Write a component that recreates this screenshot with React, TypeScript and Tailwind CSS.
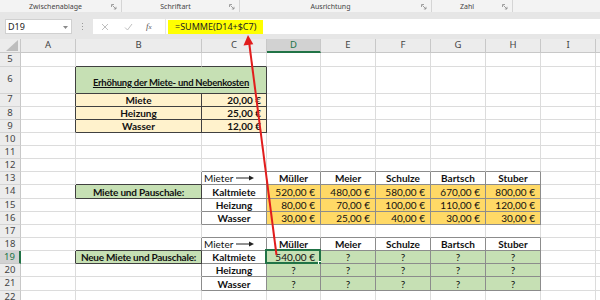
import React from 'react';

type K = 'grid' | 'dark' | 'mid';
type Cell = {
  t?: React.ReactNode;
  b?: boolean;
  a?: 'l' | 'c' | 'r';
  bg?: string;
  u?: boolean;
  span?: number;
  sel?: boolean;
  tall?: boolean;
  tr?: string;
};

const COL_W = ['w-[55px]', 'w-[126px]', 'w-[65px]', 'w-[54px]', 'w-[55px]', 'w-[55px]', 'w-[55px]', 'w-[55px]', 'w-[55px]', 'w-[40px]'];
const LET = ['A', 'B', 'C', 'D', 'E', 'F', 'G', 'H', 'I', 'J'];

const REGIONS: { c1: number; c2: number; r1: number; r2: number; k: K }[] = [
  { c1: 1, c2: 2, r1: 6, r2: 9, k: 'dark' },
  { c1: 1, c2: 1, r1: 14, r2: 14, k: 'dark' },
  { c1: 2, c2: 7, r1: 13, r2: 16, k: 'mid' },
  { c1: 1, c2: 1, r1: 19, r2: 19, k: 'dark' },
  { c1: 2, c2: 7, r1: 18, r2: 21, k: 'mid' },
];

function reg(r: number, c: number): K | null {
  for (const g of REGIONS) if (r >= g.r1 && r <= g.r2 && c >= g.c1 && c <= g.c2) return g.k;
  return null;
}

const RB: Record<K, string> = {
  grid: 'border-r-[#dcdcdc]',
  dark: 'border-r-[#404040]',
  mid: 'border-r-[#8c8c8c]',
};
const BB: Record<K, string> = {
  grid: 'border-b-[#dcdcdc]',
  dark: 'border-b-[#404040]',
  mid: 'border-b-[#8c8c8c]',
};

const Y1 = 'bg-[#fff2cc]';
const GR = 'bg-[#c6e0b4]';
const OR = 'bg-[#ffd966]';

function MieterArrow() {
  return (
    <span className="flex items-center">
      <span>Mieter</span>
      <svg width="20" height="8" viewBox="0 0 20 8" className="ml-[3px]">
        <line x1="0" y1="4" x2="15" y2="4" stroke="#222" strokeWidth="1" />
        <polygon points="13,1.5 18,4 13,6.5" fill="#222" />
      </svg>
    </span>
  );
}

const names = ['Müller', 'Meier', 'Schulze', 'Bartsch', 'Stuber'];
const vals = [
  ['520,00 €', '480,00 €', '580,00 €', '670,00 €', '800,00 €'],
  ['80,00 €', '70,00 €', '100,00 €', '110,00 €', '120,00 €'],
  ['30,00 €', '25,00 €', '40,00 €', '30,00 €', '30,00 €'],
];
const labels = ['Kaltmiete', 'Heizung', 'Wasser'];

const cells: Record<string, Cell> = {
  B6: {
    t: 'Erhöhung der Miete- und Nebenkosten',
    b: true,
    u: true,
    a: 'c',
    bg: GR,
    span: 2,
    tall: true,
    tr: 'text-[9.5px] tracking-[-0.25px]',
  },
  B7: { t: 'Miete', b: true, a: 'c', bg: Y1 },
  C7: { t: '20,00 €', b: true, a: 'r', bg: Y1 },
  B8: { t: 'Heizung', b: true, a: 'c', bg: Y1 },
  C8: { t: '25,00 €', b: true, a: 'r', bg: Y1 },
  B9: { t: 'Wasser', b: true, a: 'c', bg: Y1 },
  C9: { t: '12,00 €', b: true, a: 'r', bg: Y1 },
  C13: { t: <MieterArrow />, a: 'l' },
  B14: { t: 'Miete und Pauschale:', b: true, a: 'c', bg: GR, tr: 'text-[10px] tracking-[-0.2px]' },
  C18: { t: <MieterArrow />, a: 'l' },
  B19: { t: 'Neue Miete und Pauschale:', b: true, a: 'c', bg: GR, tr: 'text-[10px] tracking-[-0.25px]' },
};
names.forEach((n, i) => {
  cells[LET[3 + i] + '13'] = { t: n, b: true, a: 'c' };
  cells[LET[3 + i] + '18'] = { t: n, b: true, a: 'c' };
});
labels.forEach((l, j) => {
  cells['C' + (14 + j)] = { t: l, b: true, a: 'c' };
  cells['C' + (19 + j)] = { t: l, b: true, a: 'c' };
  vals[j].forEach((v, i) => {
    cells[LET[3 + i] + (14 + j)] = { t: v, a: 'r', bg: OR };
    cells[LET[3 + i] + (19 + j)] = { t: '?', a: 'c', bg: GR };
  });
});
cells.D19 = { t: '540,00 €', a: 'r', bg: GR, sel: true };

const ROWS: { n: number; h: string }[] = [
  { n: 5, h: 'h-[13.5px]' },
  { n: 6, h: 'h-[27px]' },
  ...[7, 8, 9, 10, 11, 12, 13, 14, 15, 16, 17, 18, 19, 20, 21].map((n) => ({ n, h: 'h-[13.15px]' })),
  { n: 22, h: 'h-[13.15px]' },
];

const ALIGN = {
  l: 'justify-start pl-[2px]',
  c: 'justify-center',
  r: 'justify-end pr-[5px]',
};

function Row({ n, h }: { n: number; h: string }) {
  const out: React.ReactNode[] = [];
  const selRow = n === 19;
  out.push(
    <div
      key="hdr"
      className={`${h} w-[21px] shrink-0 flex items-center justify-center border-b border-r text-[9.5px] font-['Noto_Sans',sans-serif] ${
        selRow
          ? 'bg-[#d2d2d2] text-[#217346] border-r-[#217346] border-r-2 border-b-[#c8c8c8]'
          : 'bg-[#ececec] text-[#444] border-r-[#c8c8c8] border-b-[#d4d4d4]'
      }`}
    >
      {n}
    </div>
  );
  for (let c = 0; c < COL_W.length; c++) {
    const cell = cells[LET[c] + n] || {};
    const span = cell.span || 1;
    const last = c + span - 1;
    const rk: K = reg(n, last) ?? reg(n, last + 1) ?? 'grid';
    const bk: K = reg(n, c) ?? reg(n + 1, c) ?? 'grid';
    const w = span === 2 ? 'w-[191px]' : COL_W[c];
    out.push(
      <div
        key={c}
        className={`${w} ${h} shrink-0 relative flex ${cell.tall ? 'items-end pb-[4px]' : 'items-end'} border-r border-b ${RB[rk]} ${BB[bk]} ${
          cell.bg || ''
        } ${ALIGN[cell.a || 'l']} ${cell.b ? 'font-bold' : 'font-normal'} ${cell.u ? 'underline underline-offset-[1px]' : ''} whitespace-nowrap leading-[12px] ${
          cell.tr || 'text-[10px]'
        } text-[#111]`}
      >
        {cell.t}
        {cell.sel && (
          <>
            <div className="absolute -left-[2px] -top-[2px] -right-[1px] -bottom-[1px] border-2 border-[#217346]" />
            <div className="absolute -right-[3px] -bottom-[3px] w-[5px] h-[5px] bg-[#217346] border border-white" />
          </>
        )}
      </div>
    );
    c += span - 1;
  }
  return <div className="flex">{out}</div>;
}

function Launcher() {
  return (
    <svg width="6" height="6" viewBox="0 0 6 6" className="absolute right-[4px] top-[4px]">
      <path d="M0.5 3 V0.5 H3" stroke="#8a8a8a" strokeWidth="0.8" fill="none" />
      <path d="M1.5 1.5 L5 5 M5 2.8 V5 H2.8" stroke="#8a8a8a" strokeWidth="0.8" fill="none" />
    </svg>
  );
}

function Group({ w, label }: { w: string; label: string }) {
  return (
    <div className={`${w} h-[12px] relative shrink-0 border-r border-[#d5d5d5] flex items-center justify-center pr-[10px] pt-[2px]`}>
      <span className="text-[7px] leading-[8px] text-[#444]">{label}</span>
      <Launcher />
    </div>
  );
}

export default function App() {
  return (
    <div className="w-[600px] h-[300px] overflow-hidden relative bg-white font-['Lato',sans-serif]">
      {/* Ribbon labels */}
      <div className="h-[12px] bg-[#f3f3f3] flex font-['Noto_Sans',sans-serif]">
        <Group w="w-[122px]" label="Zwischenablage" />
        <Group w="w-[118px]" label="Schriftart" />
        <Group w="w-[192px]" label="Ausrichtung" />
        <Group w="w-[81px]" label="Zahl" />
        <div className="flex-1" />
      </div>
      {/* Formula bar */}
      <div className="h-[27px] bg-[#e6e6e6] flex items-start pt-[7px] font-['Noto_Sans',sans-serif]">
        <div className="ml-[5px] w-[67px] h-[15px] bg-white border border-[#d0d0d0] flex items-center pl-[2px] relative">
          <span className="text-[9px] text-[#222]">D19</span>
          <svg width="5" height="3" viewBox="0 0 5 3" className="absolute right-[3px] top-[6px]">
            <polygon points="0,0 5,0 2.5,3" fill="#8a8a8a" />
          </svg>
        </div>
        <div className="w-[21px] h-[15px] flex flex-col items-center justify-center gap-[1.5px]">
          <div className="w-[1.5px] h-[1.5px] bg-[#9a9a9a]" />
          <div className="w-[1.5px] h-[1.5px] bg-[#9a9a9a]" />
          <div className="w-[1.5px] h-[1.5px] bg-[#9a9a9a]" />
        </div>
        <div className="w-[72px] h-[15px] bg-white flex items-center">
          <svg width="8" height="8" viewBox="0 0 8 8" className="ml-[8px]">
            <path d="M1 1 L7 7 M7 1 L1 7" stroke="#b8b8b8" strokeWidth="0.9" />
          </svg>
          <svg width="9" height="8" viewBox="0 0 9 8" className="ml-[15px]">
            <path d="M1 4.5 L3.5 7 L8 1" stroke="#b8b8b8" strokeWidth="0.9" fill="none" />
          </svg>
          <span className="ml-[13px] text-[9px] italic font-['Liberation_Serif',serif] text-[#555]">
            f<span className="text-[7px]">x</span>
          </span>
        </div>
        <div className="flex-1 ml-[1px] h-[15px] bg-white flex items-center">
          <div className="ml-[2px] w-[95px] h-[14px] bg-[#ffff00] flex items-center pl-[7px]">
            <span className="text-[9px] text-[#222] leading-[14px]">=SUMME(D14+$C7)</span>
          </div>
        </div>
      </div>
      {/* Column headers */}
      <div className="flex h-[14px] font-['Noto_Sans',sans-serif]">
        <div className="w-[21px] h-[14px] shrink-0 bg-[#ececec] border-r border-b border-[#c8c8c8] relative">
          <svg width="12" height="11" viewBox="0 0 12 11" className="absolute right-[2px] bottom-[1px]">
            <polygon points="12,0 12,11 0,11" fill="#bdbdbd" />
          </svg>
        </div>
        {LET.map((l, i) => (
          <div
            key={l}
            className={`${COL_W[i]} h-[14px] shrink-0 flex items-center justify-center border-r text-[9.5px] ${
              l === 'D'
                ? 'bg-[#d2d2d2] text-[#217346] border-b-2 border-b-[#217346] border-r-[#c8c8c8]'
                : 'bg-[#ececec] text-[#444] border-b border-[#c8c8c8]'
            }`}
          >
            {l === 'J' ? '' : l}
          </div>
        ))}
      </div>
      {ROWS.map((r) => (
        <Row key={r.n} n={r.n} h={r.h} />
      ))}
      {/* Red arrow overlay */}
      <svg width="600" height="300" viewBox="0 0 600 300" className="absolute left-0 top-0 pointer-events-none">
        <line x1="276.5" y1="255" x2="249.2" y2="43" stroke="#e11d1d" strokeWidth="2" />
        <polygon points="248,35 253.3,44.3 243.5,45.6" fill="#e11d1d" />
      </svg>
    </div>
  );
}
